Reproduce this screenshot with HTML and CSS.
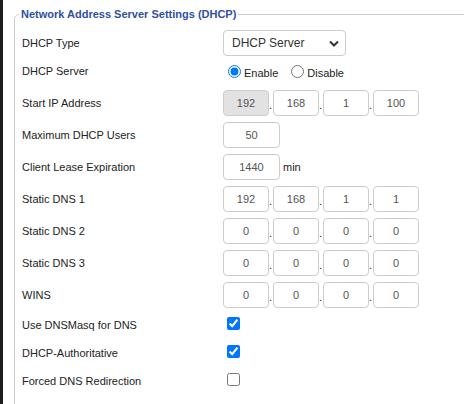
FILE: index.html
```html
<!DOCTYPE html>
<html lang="en">

<head>
  <meta charset="UTF-8" />
  <title>DHCP Settings</title>
  <link rel="stylesheet" href="styles.css">
</head>

<body>
  <div class="page">
    <div class="edge"></div>

    <main class="content">
      <!-- DHCP SETTINGS -->
      <fieldset class="settings">
        <legend>Network Address Server Settings (DHCP)</legend>

        <div class="row">
          <span class="label">DHCP Type</span>
          <select class="select">
            <option>DHCP Server</option>
            <option>DHCP Forwarder</option>
          </select>
        </div>

        <div class="row row-radio">
          <span class="label">DHCP Server</span>
          <label class="opt"><input type="radio" name="dhcp_srv" checked><span>Enable</span></label>
          <label class="opt"><input type="radio" name="dhcp_srv"><span>Disable</span></label>
        </div>

        <div class="row">
          <span class="label">Start IP Address</span>
          <div class="ip">
            <input class="octet" value="192" disabled><span class="dot">.</span>
            <input class="octet" value="168"><span class="dot">.</span>
            <input class="octet" value="1"><span class="dot">.</span>
            <input class="octet" value="100">
          </div>
        </div>

        <div class="row">
          <span class="label">Maximum DHCP Users</span>
          <input class="octet wide" value="50">
        </div>

        <div class="row">
          <span class="label">Client Lease Expiration</span>
          <input class="octet wide" value="1440">
          <span class="unit">min</span>
        </div>

        <div class="row">
          <span class="label">Static DNS 1</span>
          <div class="ip">
            <input class="octet" value="192"><span class="dot">.</span>
            <input class="octet" value="168"><span class="dot">.</span>
            <input class="octet" value="1"><span class="dot">.</span>
            <input class="octet" value="1">
          </div>
        </div>

        <div class="row">
          <span class="label">Static DNS 2</span>
          <div class="ip">
            <input class="octet" value="0"><span class="dot">.</span>
            <input class="octet" value="0"><span class="dot">.</span>
            <input class="octet" value="0"><span class="dot">.</span>
            <input class="octet" value="0">
          </div>
        </div>

        <div class="row">
          <span class="label">Static DNS 3</span>
          <div class="ip">
            <input class="octet" value="0"><span class="dot">.</span>
            <input class="octet" value="0"><span class="dot">.</span>
            <input class="octet" value="0"><span class="dot">.</span>
            <input class="octet" value="0">
          </div>
        </div>

        <div class="row">
          <span class="label">WINS</span>
          <div class="ip">
            <input class="octet" value="0"><span class="dot">.</span>
            <input class="octet" value="0"><span class="dot">.</span>
            <input class="octet" value="0"><span class="dot">.</span>
            <input class="octet" value="0">
          </div>
        </div>

        <div class="row row-check">
          <span class="label">Use DNSMasq for DNS</span>
          <input type="checkbox" class="check" checked>
        </div>

        <div class="row row-check">
          <span class="label">DHCP-Authoritative</span>
          <input type="checkbox" class="check" checked>
        </div>

        <div class="row row-check">
          <span class="label">Forced DNS Redirection</span>
          <input type="checkbox" class="check">
        </div>
      </fieldset>
    </main>
  </div>
</body>

</html>
```

FILE: styles.css
```css
/* Base */
* {
  box-sizing: border-box;
}

html,
body {
  margin: 0;
  height: 404px;
  overflow: hidden;
  background: #fff;
  font-family: 'Liberation Sans', Arial, sans-serif;
  font-size: 11px;
  color: #222;
}

.page {
  display: flex;
  height: 100%;
  overflow: hidden;
}

.edge {
  width: 3px;
  flex-shrink: 0;
  background: #1e1e1e;
}

.content {
  flex: none;
  width: 620px;
  padding-left: 11px;
}

/* Fieldset */
.settings {
  width: 600px;
  margin: 7px 0 0 0;
  padding: 5px 0 20px 7px;
  border: 1px solid #ccc;
  border-radius: 5px;
}

.settings legend {
  margin-left: -3px;
  padding: 0 2px;
  font-size: 11px;
  line-height: 15px;
  font-weight: bold;
  color: #2f4fa6;
}

/* Rows */
.row {
  display: flex;
  align-items: center;
  height: 32px;
}

.row-radio {
  height: 28px;
  padding-bottom: 4px;
}

.row-check {
  height: 28px;
}

.label {
  width: 201px;
  flex-shrink: 0;
}

/* Controls */
.select {
  width: 123px;
  height: 26px;
  padding: 0 0 0 8px;
  border: 1px solid #ccc;
  border-radius: 4px;
  font-family: 'Liberation Sans', Arial, sans-serif;
  font-size: 12px;
  color: #333;
  appearance: none;
  -webkit-appearance: none;
  background: #fff url("data:image/svg+xml,%3Csvg xmlns='http://www.w3.org/2000/svg' width='10' height='7' viewBox='0 0 10 7'%3E%3Cpath d='M1 1.5l4 4 4-4' fill='none' stroke='%23333' stroke-width='2'/%3E%3C/svg%3E") no-repeat right 6px center;
}

.opt {
  display: inline-flex;
  align-items: center;
}

.opt input {
  width: 13px;
  height: 13px;
  margin: 0 3px 0 5px;
}

.opt span {
  padding-top: 3px;
  margin-right: 8px;
}

.ip {
  display: flex;
  align-items: center;
}

.octet {
  width: 46px;
  height: 26px;
  padding: 0;
  border: 1px solid #ccc;
  border-radius: 4px;
  background: #fff;
  font-family: 'Liberation Sans', Arial, sans-serif;
  font-size: 11px;
  color: #555;
  text-align: center;
}

.octet:disabled {
  background: #e2e2e2;
  color: #555;
}

.octet.wide {
  width: 57px;
}

.dot {
  width: 4px;
  padding-top: 4px;
}

.unit {
  margin-left: 3px;
}

.check {
  width: 13px;
  height: 13px;
  margin: 0 3px 3px 4px;
}
```
